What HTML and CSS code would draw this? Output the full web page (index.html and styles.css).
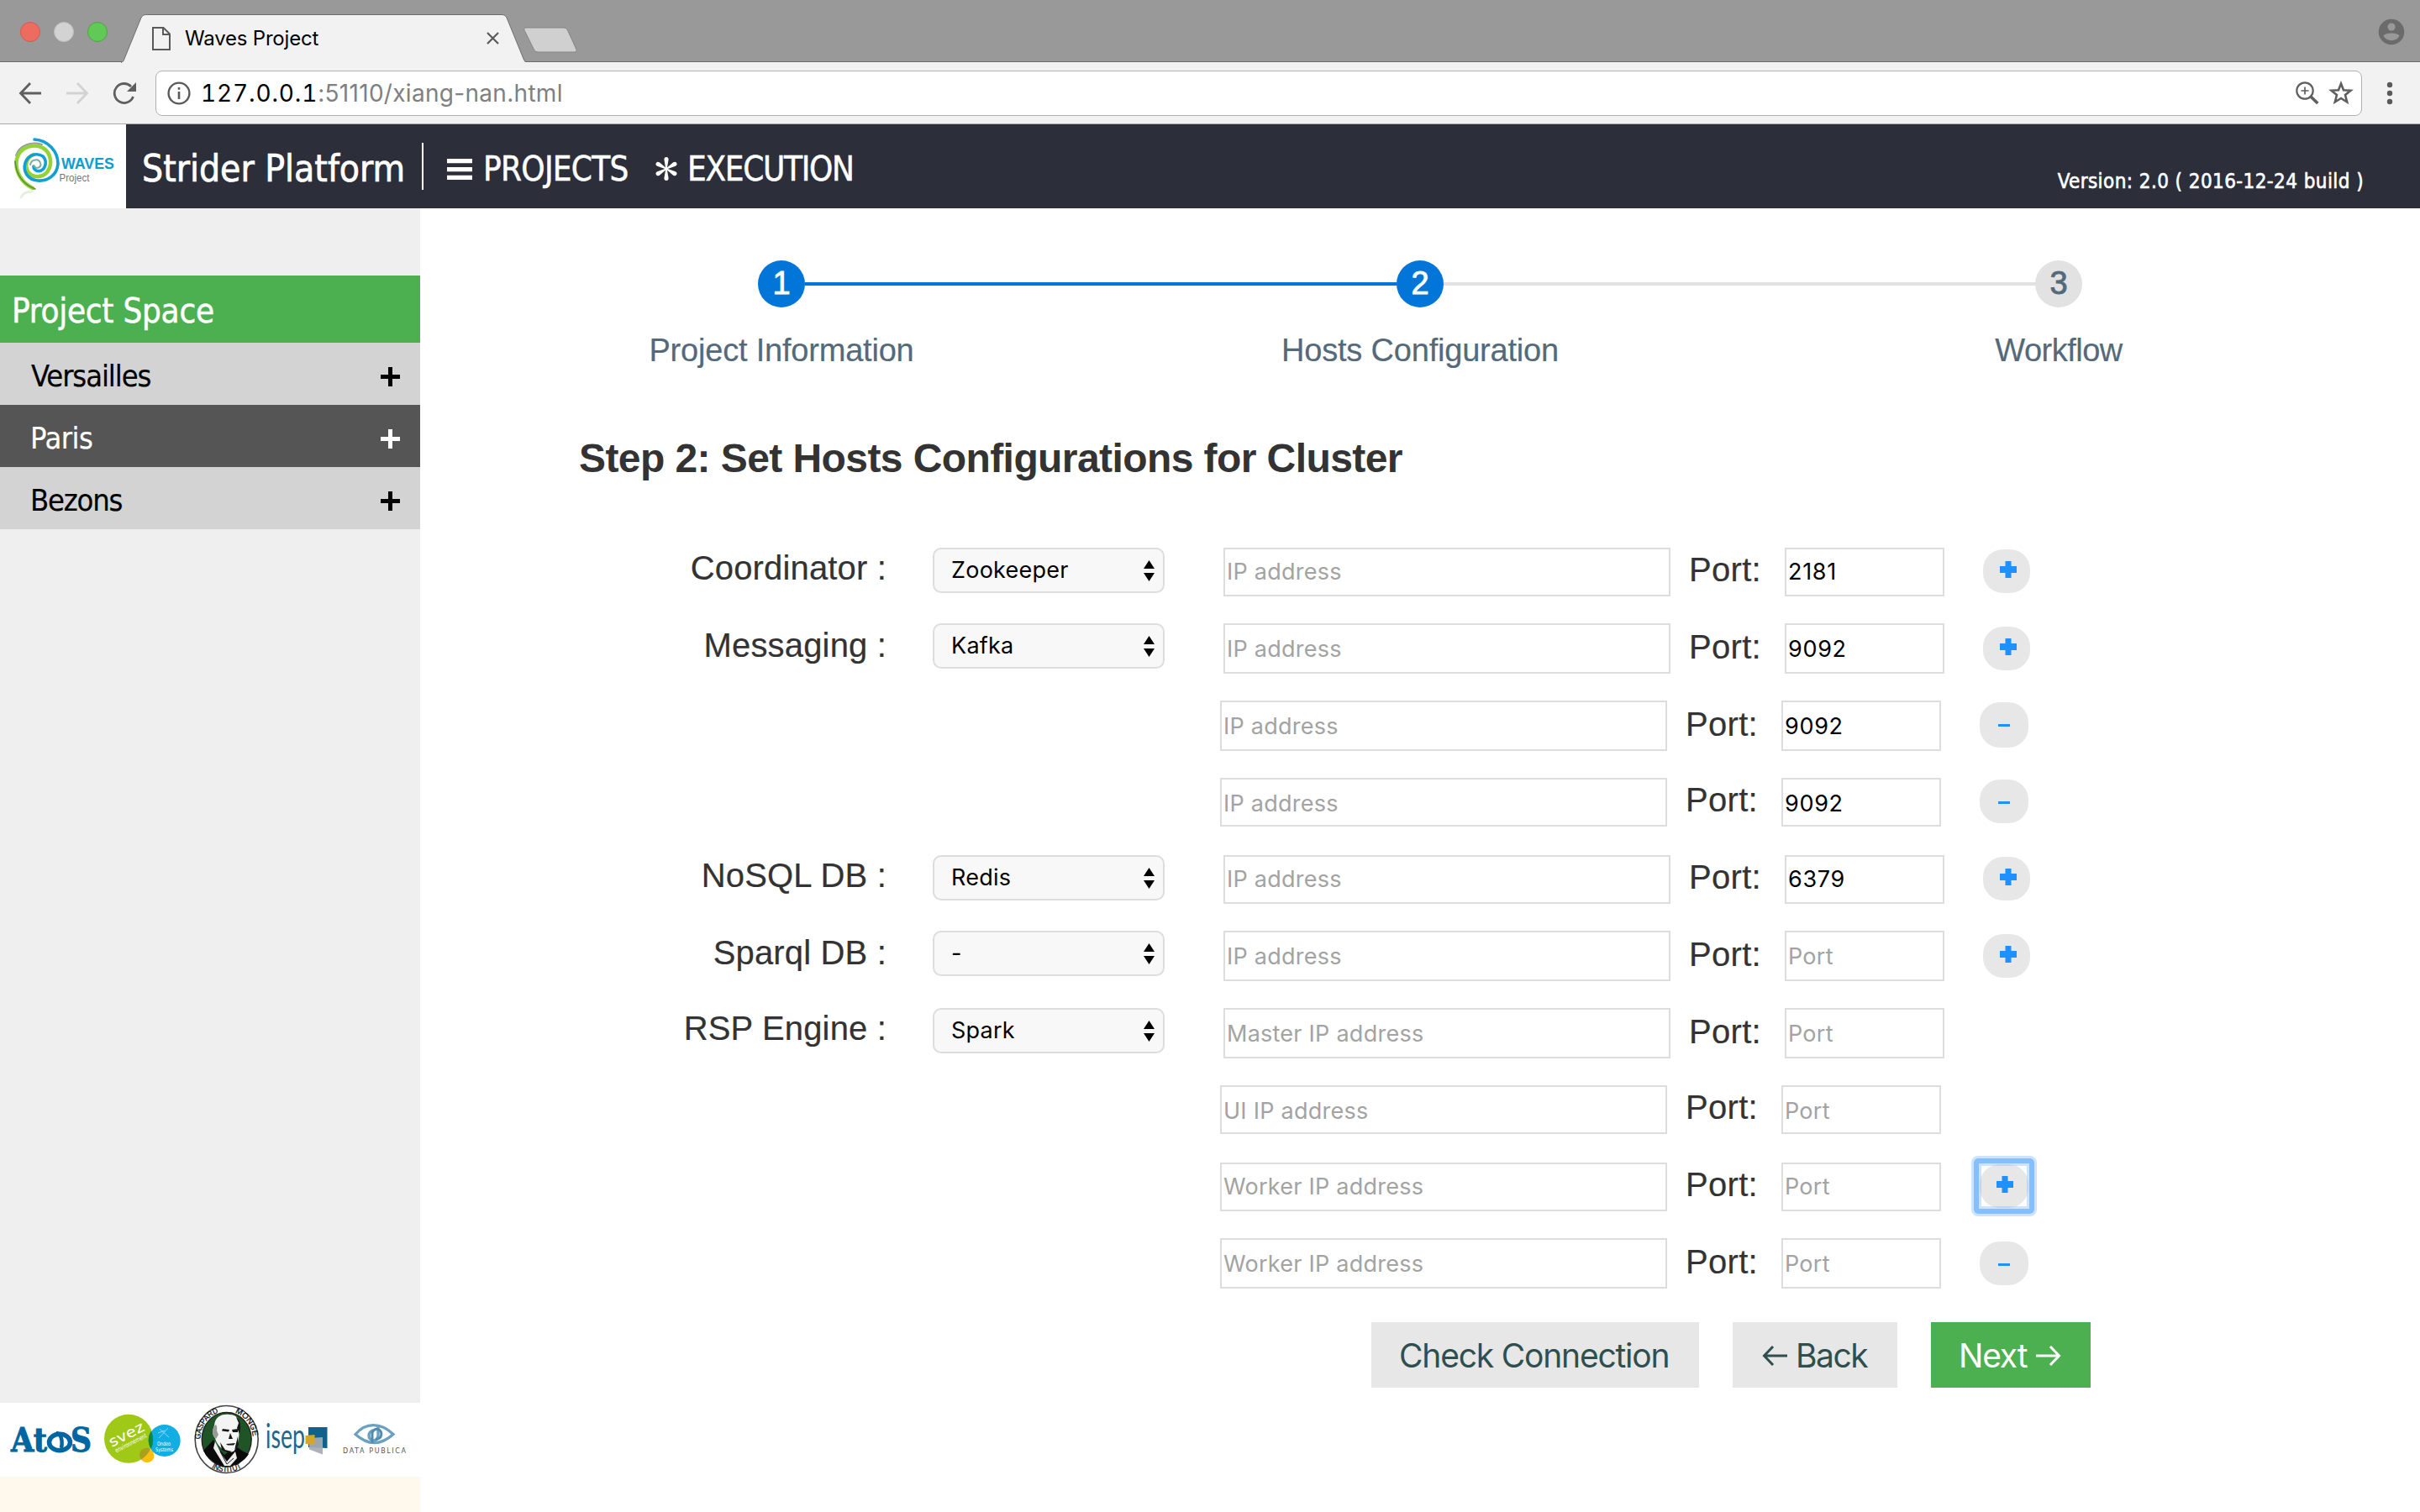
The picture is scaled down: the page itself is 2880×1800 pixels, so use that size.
FILE: index.html
```html
<!DOCTYPE html>
<html lang="en">
<head>
<meta charset="utf-8">
<title>Waves Project</title>
<link rel="stylesheet" href="styles.css">
</head>
<body>
<svg class="defs" width="0" height="0" aria-hidden="true">
  <symbol id="plus" viewBox="0 0 20 20"><path d="M6.500 0h7v6H20v8h-6.500v6h-7v-6H0V6h6.500z"/></symbol>
  <symbol id="minus" viewBox="0 0 14 3"><path d="M0 0h14v3H0z"/></symbol>
</svg>

<div class="tabstrip">
  <div class="lights"><span class="light red"></span><span class="light grey"></span><span class="light green"></span></div>
  <div class="tab">
    <svg class="tab-shape" width="486" height="58" viewBox="0 0 486 58"><path d="M0 57.500C2 57 3 56 4 53L24 4Q25.500 .5 29 .5H454Q457.500 .5 459 4L479 53Q480 57 484 57.500" fill="#f2f2f2" stroke="#6e6e6e"/><path d="M1 57h483v2H1z" fill="#f2f2f2"/></svg>
    <svg class="doc" width="22" height="28" viewBox="0 0 22 28" fill="none" stroke="#5a5a5a" stroke-width="2"><path d="M1 1h12.500L21 8.500V27H1zM13 1v8h8"/></svg>
    <span class="tab-title">Waves Project</span>
    <svg class="tab-close" width="15" height="15" viewBox="0 0 15 15" stroke="#5a5a5a" stroke-width="2.200"><path d="M1 1l13 13M14 1L1 14"/></svg>
  </div>
  <svg class="newtab" width="66" height="32" viewBox="0 0 66 32"><path d="M3 1H49Q52 1 53.500 4L64 27Q65 30 62 30H18Q15 30 13.500 27L2 4Q1 1 3 1z" fill="#d0d0d0" stroke="#858585"/></svg>
  <svg class="avatar" width="32" height="32" viewBox="0 0 32 32"><circle cx="16" cy="16" r="15.300" fill="#6b6b6b"/><circle cx="16" cy="10" r="4.600" fill="#999"/><path d="M6.500 20.500C9 16.500 23 16.500 25.500 20.500C22 28 10 28 6.500 20.500z" fill="#999"/></svg>
</div>

<div class="toolbar">
  <svg class="nav" width="28" height="28" viewBox="0 0 28 28" fill="none" stroke="#5f5f5f" stroke-width="2.800"><path d="M27 14H3M14 2L2.500 14L14 26"/></svg>
  <svg class="nav" width="28" height="28" viewBox="0 0 28 28" fill="none" stroke="#d2d2d2" stroke-width="2.800"><path d="M1 14H25M14 2L25.500 14L14 26"/></svg>
  <svg class="nav" width="28" height="28" viewBox="0 0 28 28"><path d="M24.500 18A11.500 11.500 0 1 1 22 6" fill="none" stroke="#5f5f5f" stroke-width="2.800"/><path d="M28 1V12H17z" fill="#5f5f5f"/></svg>
  <div class="omnibox">
    <svg width="28" height="28" viewBox="0 0 28 28"><circle cx="14" cy="14" r="12.400" fill="none" stroke="#5a5a5a" stroke-width="2.400"/><path d="M12.700 7h2.600v2.800h-2.600zM12.700 12h2.600v9h-2.600z" fill="#5a5a5a"/></svg>
    <span class="url"><span class="host">127.0.0.1</span><span class="path">:51110/xiang-nan.html</span></span>
    <svg class="lens" width="28" height="28" viewBox="0 0 28 28" fill="none" stroke="#5f5f5f"><circle cx="11" cy="11" r="9.700" stroke-width="2.200"/><path d="M6.500 11h9M11 6.500v9" stroke-width="1.700"/><path d="M18 18L26.300 26" stroke-width="3.600"/></svg>
    <svg width="30" height="29" viewBox="0 0 30 29"><path d="M15 3.500L18 11.200L26.500 11.800L20 17L22.200 25.500L15 21L7.800 25.500L10 17L3.500 11.800L12 11.200z" fill="none" stroke="#5f5f5f" stroke-width="2.600"/></svg>
  </div>
  <svg class="menu" width="8" height="28" viewBox="0 0 8 28" fill="#5a5a5a"><circle cx="4" cy="4" r="3.200"/><circle cx="4" cy="14" r="3.200"/><circle cx="4" cy="24" r="3.200"/></svg>
</div>

<header class="header">
  <div class="logo">
    <svg width="150" height="100" viewBox="0 0 150 100" fill="none" stroke-linecap="round">
      <path d="M19 37C23 25 37 20 50 24" stroke="#9a9a9a" stroke-width="2"/>
      <path d="M39 76C26 70 17 56 20 41C24 27 40 22 51 28C61 34 63 48 56 57C50 64 38 64 33 56C29 48 32 39 40 36" stroke="#94d335" stroke-width="4.500"/>
      <path d="M41 18C57 19 69 32 69 47C68 61 56 68 45 67C33 66 27 56 30 46C33 37 43 33 51 38C56 43 55 52 49 55C44 57 40 54 40 50" stroke="#149fd2" stroke-width="3.600"/>
      <path d="M36 48C37 42 46 40 48 46C50 51 43 54 41 50" stroke="#7fae9a" stroke-width="2"/>
      <path d="M18 44C19 60 28 72 42 77" stroke="#5d8d35" stroke-width="1.600"/>
      <path d="M25 87C27 82 32 80 38 80" stroke="#e6efe0" stroke-width="3"/>
      <text x="73" y="52.500" class="logo-waves" textLength="63" lengthAdjust="spacingAndGlyphs">WAVES</text>
      <text x="70.500" y="67.500" class="logo-project" textLength="36" lengthAdjust="spacingAndGlyphs">Project</text>
    </svg>
  </div>
  <div class="brand">Strider Platform</div>
  <nav class="topnav">
    <a class="nav-projects"><svg width="30" height="25" viewBox="0 0 30 25" fill="#fff"><path d="M0 0h30v5.200H0zM0 10h30v5.200H0zM0 19.800h30v5.200H0z"/></svg><span>PROJECTS</span></a>
    <a class="nav-execution"><svg width="26" height="28" viewBox="0 0 26 28" fill="#fff"><g id="petal"><path d="M12.300 14L10.400 3Q10.400 0 13 0Q15.600 0 15.600 3L13.700 14z"/></g><use href="#petal" transform="rotate(60 13 14)"/><use href="#petal" transform="rotate(120 13 14)"/><use href="#petal" transform="rotate(180 13 14)"/><use href="#petal" transform="rotate(240 13 14)"/><use href="#petal" transform="rotate(300 13 14)"/></svg><span>EXECUTION</span></a>
  </nav>
  <div class="version">Version: 2.0 ( 2016-12-24 build )</div>
</header>

<div class="body">
  <aside class="sidebar">
    <div class="side-title">Project Space</div>
    <div class="side-item"><span class="n1">Versailles</span><svg width="23" height="23" viewBox="0 0 23 23"><path d="M9 0h5v9h9v5h-9v9H9v-9H0V9h9z"/></svg></div>
    <div class="side-item active"><span class="n2">Paris</span><svg width="23" height="23" viewBox="0 0 23 23"><path d="M9 0h5v9h9v5h-9v9H9v-9H0V9h9z"/></svg></div>
    <div class="side-item"><span class="n3">Bezons</span><svg width="23" height="23" viewBox="0 0 23 23"><path d="M9 0h5v9h9v5h-9v9H9v-9H0V9h9z"/></svg></div>
    <div class="partners">
      <svg width="500" height="88" viewBox="0 0 500 88">
        <text x="13" y="58" class="p-atos" textLength="43" lengthAdjust="spacingAndGlyphs">At</text>
        <ellipse cx="71" cy="47" rx="12.500" ry="9.800" fill="none" stroke="#0066a1" stroke-width="5.500"/>
        <path d="M67 36C72 36 75 44 73 54" fill="none" stroke="#0066a1" stroke-width="4.500"/>
        <text x="84" y="58" class="p-atos" textLength="25" lengthAdjust="spacingAndGlyphs">S</text>
        <circle cx="153" cy="42.700" r="29" fill="#9fc916"/>
        <circle cx="175" cy="62.700" r="8.500" fill="#fdbf0f"/>
        <path d="M167 58A8.500 8.500 0 0 1 179 55A29 29 0 0 1 168 67.500A8.500 8.500 0 0 1 167 58z" fill="#a7a11d"/>
        <circle cx="195.700" cy="45" r="19" fill="#12ade2"/>
        <path d="M180 33.500A29 29 0 0 1 180 55A19 19 0 0 1 180 33.500z" fill="#0f8741"/>
        <text transform="translate(133 53) rotate(-27)" class="p-suez" textLength="45" lengthAdjust="spacingAndGlyphs">svez</text>
        <text transform="translate(138.500 59.500) rotate(-27)" class="p-env" textLength="41" lengthAdjust="spacingAndGlyphs">environnement</text>
        <path d="M190 31L201 41M200 30L189 42M188 36L196 33" stroke="#8fd6f0" fill="none"/>
        <text x="187" y="51" class="p-ondeo" textLength="16" lengthAdjust="spacingAndGlyphs">Ondeo</text>
        <text x="185" y="57.500" class="p-ondeo" textLength="21" lengthAdjust="spacingAndGlyphs">Systems</text>
        <ellipse cx="269.700" cy="43.500" rx="37.500" ry="40" fill="#fff" stroke="#444" stroke-width="1.600"/>
        <ellipse cx="269.700" cy="43.500" rx="29.500" ry="32" fill="#1f5427" stroke="#222" stroke-width="1.400"/>
        <path d="M242 57L254 44L258 52L267 62L281 52L288 57L296 61Q288 74 270 75.500Q252 74 242 57z" fill="#0b0b0b"/>
        <path d="M256 46L263 60L270 70L280 58L282 66L274 75H267L254 54z" fill="#eee"/>
        <path d="M262 58L270 73L278 66" fill="none" stroke="#222"/>
        <path d="M255 27C256 15 266 13 273 14C283 14 286 22 285 30L284 44C283 54 279 60 272 59C264 57 257 48 256 42C252 38 253 32 255 27z" fill="#f4f4f4"/>
        <path d="M255 28C257 24 259 28 258 33L260 38L257 43L254 39C252 34 253 31 255 28z" fill="#999"/>
        <path d="M281 17C287 20 287 30 285 37L282 30L284 24zM265 31L273 32L272 34.500L264 33.500zM276 32L283 31L283 35L277 35zM274 36L277 43L272 43zM269 49L280 48L278 50.500L271 50.500zM262 47L268 56L276 58L272 60L264 56zM283 40L284 50L279 58L280 52z" fill="#161616"/>
        <path id="arcTop" d="M238.500 43.500A31.200 33.500 0 0 1 301 43.500" fill="none"/>
        <path id="arcBottom" d="M233.500 43.500A36.200 38.800 0 0 0 306 43.500" fill="none"/>
        <text class="p-ring"><textPath href="#arcTop" startOffset="0" textLength="41" lengthAdjust="spacingAndGlyphs">GASPARD</textPath></text>
        <text class="p-ring"><textPath href="#arcTop" startOffset="61" textLength="37" lengthAdjust="spacingAndGlyphs">MONGE</textPath></text>
        <text class="p-ring"><textPath href="#arcBottom" startOffset="40" textLength="38" lengthAdjust="spacingAndGlyphs">INSTITUT</textPath></text>
        <text x="316" y="53.500" class="p-isep" textLength="47" lengthAdjust="spacingAndGlyphs">isep</text>
        <path d="M367 29h22.500v25l-22.500-1z" fill="#10618b"/><path d="M368 42l16-1v20.500l-16-6z" fill="#a5abb3" opacity=".92"/><path d="M363.500 39l11-1v12l-11-1z" fill="#d5a52c"/>
        <path d="M423 37.500C435 23 453 23 468 37.500C453 51 438 51 423 37.500z" fill="none" stroke="#6ba0bf" stroke-width="3.200"/><path d="M450 28V39A5.500 6 0 1 1 445 33" fill="none" stroke="#6ba0bf" stroke-width="3.400"/><path d="M443 48V36A5.500 6 0 1 1 447 43" fill="none" stroke="#4f8cb0" stroke-width="3"/>
        <text x="408" y="60" class="p-data" textLength="75">DATA PUBLICA</text>
      </svg>
    </div>
  </aside>

  <main class="main">
    <ol class="steps">
      <li class="step done"><span class="num">1</span><span class="step-label">Project Information</span></li>
      <li class="step current"><span class="num">2</span><span class="step-label">Hosts Configuration</span></li>
      <li class="step"><span class="num">3</span><span class="step-label workflow">Workflow</span></li>
    </ol>
    <h1 class="title">Step 2: Set Hosts Configurations for Cluster</h1>

    <form class="hosts">
      <div class="row">
        <label class="name">Coordinator :</label>
        <div class="select"><select><option>Zookeeper</option></select><svg width="13" height="25" viewBox="0 0 13 25"><path d="M0 10L6.500 0L13 10zM0 15h13L6.500 25z"/></svg></div>
        <input class="ip" placeholder="IP address"><label class="port-label">Port:</label><input class="port" value="2181">
        <button type="button" class="round"><svg width="20" height="20"><use href="#plus"/></svg></button>
      </div>
      <div class="row tall">
        <label class="name">Messaging :</label>
        <div class="select"><select><option>Kafka</option></select><svg width="13" height="25" viewBox="0 0 13 25"><path d="M0 10L6.500 0L13 10zM0 15h13L6.500 25z"/></svg></div>
        <input class="ip" placeholder="IP address"><label class="port-label">Port:</label><input class="port" value="9092">
        <button type="button" class="round low"><svg width="20" height="20"><use href="#plus"/></svg></button>
      </div>
      <div class="row tall sub">
        <input class="ip" placeholder="IP address"><label class="port-label">Port:</label><input class="port" value="9092">
        <button type="button" class="round remove big"><svg width="14" height="3"><use href="#minus"/></svg></button>
      </div>
      <div class="row sub drop">
        <input class="ip" placeholder="IP address"><label class="port-label">Port:</label><input class="port" value="9092">
        <button type="button" class="round remove"><svg width="14" height="3"><use href="#minus"/></svg></button>
      </div>
      <div class="row">
        <label class="name">NoSQL DB :</label>
        <div class="select"><select><option>Redis</option></select><svg width="13" height="25" viewBox="0 0 13 25"><path d="M0 10L6.500 0L13 10zM0 15h13L6.500 25z"/></svg></div>
        <input class="ip" placeholder="IP address"><label class="port-label">Port:</label><input class="port" value="6379">
        <button type="button" class="round"><svg width="20" height="20"><use href="#plus"/></svg></button>
      </div>
      <div class="row tall">
        <label class="name">Sparql DB :</label>
        <div class="select"><select><option>-</option></select><svg width="13" height="25" viewBox="0 0 13 25"><path d="M0 10L6.500 0L13 10zM0 15h13L6.500 25z"/></svg></div>
        <input class="ip" placeholder="IP address"><label class="port-label">Port:</label><input class="port" placeholder="Port">
        <button type="button" class="round low"><svg width="20" height="20"><use href="#plus"/></svg></button>
      </div>
      <div class="row tall">
        <label class="name high">RSP Engine :</label>
        <div class="select"><select><option>Spark</option></select><svg width="13" height="25" viewBox="0 0 13 25"><path d="M0 10L6.500 0L13 10zM0 15h13L6.500 25z"/></svg></div>
        <input class="ip" placeholder="Master IP address"><label class="port-label">Port:</label><input class="port" placeholder="Port">
      </div>
      <div class="row sub drop">
        <input class="ip" placeholder="UI IP address"><label class="port-label">Port:</label><input class="port" placeholder="Port">
      </div>
      <div class="row sub">
        <input class="ip" placeholder="Worker IP address"><label class="port-label">Port:</label><input class="port" placeholder="Port">
        <button type="button" class="round focused"><svg width="20" height="20"><use href="#plus"/></svg></button>
      </div>
      <div class="row tall sub">
        <input class="ip" placeholder="Worker IP address"><label class="port-label">Port:</label><input class="port" placeholder="Port">
        <button type="button" class="round remove low"><svg width="14" height="3"><use href="#minus"/></svg></button>
      </div>
    </form>

    <div class="actions">
      <button type="button" class="btn check">Check Connection</button>
      <button type="button" class="btn back"><svg width="30" height="24" viewBox="0 0 30 24"><path d="M30 12H3M13 1L2.500 12L13 23"/></svg><span>Back</span></button>
      <button type="button" class="btn next"><span>Next</span><svg width="30" height="24" viewBox="0 0 30 24"><path d="M0 12H27M17 1L27.500 12L17 23"/></svg></button>
    </div>
  </main>
</div>
</body>
</html>
```
FILE: styles.css
```css
* { box-sizing: border-box; }
body {
  margin: 0;
  width: 2880px;
  height: 1800px;
  overflow: hidden;
  display: flex;
  flex-direction: column;
  background: #fff;
  font-family: "Liberation Sans", Helvetica, Arial, sans-serif;
  color: #333;
}
svg { display: block; flex: none; }
.defs { position: absolute; }

/* Browser window */
.tabstrip {
  height: 74px;
  flex: none;
  display: flex;
  background: #999;
  border-bottom: 1px solid #6e6e6e;
}
.lights { display: flex; gap: 16px; padding: 26px 0 0 24px; width: 143px; flex: none; }
.light { width: 24px; height: 24px; border-radius: 50%; border: 1px solid; }
.red { background: #ee6b60; border-color: #d9574c; }
.grey { background: #d3d3d3; border-color: #bdbdbd; }
.green { background: #61c955; border-color: #4aa83f; }
.tab {
  position: relative;
  width: 479px;
  height: 57px;
  margin-top: 17px;
  padding-left: 38px;
  display: flex;
  align-items: center;
}
.tab-shape { position: absolute; left: 1px; top: 0; }
.doc, .tab-title, .tab-close { position: relative; }
.tab-title {
  margin-left: 17px;
  width: 359px;
  font: 24px/30px Inter, sans-serif;
  letter-spacing: -0.2px;
  color: #000;
}
.newtab { margin-top: 32px; }
.avatar { margin: 22px 18px 0 auto; }
.toolbar {
  height: 74px;
  flex: none;
  display: flex;
  align-items: center;
  padding: 0 32px 0 22px;
  background: #f2f2f2;
  border-bottom: 1px solid #a9a9ab;
}
.nav { margin-right: 28px; }
.nav:nth-child(3) { margin-right: 23px; }
.omnibox {
  flex: 1;
  height: 54px;
  display: flex;
  align-items: center;
  padding: 0 9px 0 13px;
  background: #fff;
  border: 1px solid #b1b1b1;
  border-radius: 8px;
}
.url {
  flex: 1;
  padding-left: 12px;
  font: 28px/36px Inter, sans-serif;
  color: #808080;
}
.host { color: #000; font-feature-settings: "tnum"; letter-spacing: 0.85px; }
.path { letter-spacing: 0.3px; }
.lens { margin-right: 11px; }
.menu { margin-left: 29px; }

/* Header */
.header {
  height: 100px;
  flex: none;
  display: flex;
  background: #2c2f3a;
  color: #fff;
  font-family: "DejaVu Sans Condensed", "DejaVu Sans", sans-serif;
  font-stretch: condensed;
}
.logo { width: 150px; background: #fff; }
.logo-waves { font: bold 18px "Liberation Sans", sans-serif; fill: #129bcf; stroke: none; }
.logo-project { font: 12px "Liberation Sans", sans-serif; fill: #777; stroke: none; }
.brand {
  width: 354px;
  height: 56px;
  margin-top: 22px;
  padding-left: 19px;
  border-right: 2px solid #fff;
  font-size: 44px;
  line-height: 61px;
  letter-spacing: 0;
  white-space: nowrap;
  -webkit-text-stroke: 0.7px currentColor;
}
.topnav { display: flex; padding-left: 27px; font-size: 40px; line-height: 106px; -webkit-text-stroke: 0.5px currentColor; }
.topnav a { display: flex; }
.nav-projects svg { margin: 41px 13px 0 1px; }
.nav-projects { width: 249px; letter-spacing: -0.7px; }
.nav-execution svg { margin: 39px 12px 0 0; }
.nav-execution { letter-spacing: -1.3px; }
.version {
  margin-left: auto;
  padding-right: 67px;
  font-size: 24px;
  line-height: 136px;
  letter-spacing: 0.42px;
  -webkit-text-stroke: 0.6px currentColor;
}

/* Sidebar */
.body { flex: 1; display: flex; min-height: 0; }
.sidebar {
  width: 500px;
  flex: none;
  display: flex;
  flex-direction: column;
  padding-top: 80px;
  background: linear-gradient(#efefef 1510px, #fff9ed 1510px);
  font-family: "DejaVu Sans Condensed", "DejaVu Sans", sans-serif;
  font-stretch: condensed;
}
.side-title {
  height: 80px;
  padding-left: 14px;
  background: #4caf50;
  color: #fff;
  font-size: 40px;
  line-height: 84px;
  letter-spacing: -0.25px;
  -webkit-text-stroke: 0.5px currentColor;
}
.side-item {
  height: 74px;
  display: flex;
  justify-content: space-between;
  padding: 0 24px 0 35px;
  background: #d3d3d3;
  color: #000;
  font-size: 36px;
  line-height: 79px;
  -webkit-text-stroke: 0.2px currentColor;
}
.side-item svg { margin-top: 29px; fill: currentColor; }
.side-item.active { background: #555; color: #fff; }
.n1 { padding-left: 2px; letter-spacing: -1.08px; }
.n2 { padding-left: 1px; letter-spacing: -0.5px; }
.n3 { padding-left: 1px; letter-spacing: -1.2px; }
.partners { margin-top: auto; margin-bottom: 42px; background: #fff; }
.p-atos { font: bold 40px "DejaVu Serif", serif; fill: #0066a1; stroke: #0066a1; stroke-width: 1px; }
.p-suez { font: 17px "DejaVu Sans", sans-serif; fill: #fff; }
.p-env { font: 7.5px "DejaVu Sans", sans-serif; fill: #fff; }
.p-ondeo { font: 6.5px "DejaVu Sans", sans-serif; fill: #fff; }
.p-ring { font: 9.5px "Liberation Sans", sans-serif; fill: #111; stroke: #111; stroke-width: 0.3px; }
.p-isep { font: 40px Lato, sans-serif; fill: #24658b; }
.p-data { font: 8px "DejaVu Sans", sans-serif; fill: #555; }

/* Wizard */
.main { flex: 1; padding: 62px 0 0 190px; }
.steps {
  list-style: none;
  display: flex;
  margin: 0 0 0 -140px;
  padding: 0;
}
.step {
  position: relative;
  width: 760px;
  display: flex;
  flex-direction: column;
  align-items: center;
  color: #546a7b;
  font-size: 38px;
  line-height: 48px;
}
.step:not(:last-child)::after {
  content: "";
  position: absolute;
  left: 408px;
  top: 26px;
  width: 704px;
  height: 4px;
  background: #e2e2e2;
}
.step.done:not(:last-child)::after { background: #0275d8; }
.num {
  width: 56px;
  height: 56px;
  margin-bottom: 27px;
  border-radius: 50%;
  background: #e2e2e2;
  text-align: center;
  line-height: 54px;
  -webkit-text-stroke: 0.9px currentColor;
}
.done .num, .current .num { background: #0275d8; color: #fff; }
.step-label { letter-spacing: -0.2px; -webkit-text-stroke: 0.2px currentColor; }
.workflow { letter-spacing: -0.5px; }
.title {
  margin: 75px 0 76px -1px;
  font-size: 48px;
  line-height: 60px;
  letter-spacing: -0.58px;
}

/* Hosts form */
.row {
  display: grid;
  grid-template-columns: 420px 346px 532px 136px 190px 46px 60px;
  height: 92px;
  align-items: start;
}
.row:nth-child(4n + 1) { height: 90px; }
.row:last-child { height: 60px; }
.sub { margin-left: -4px; }
.name {
  grid-column: 1;
  width: 365px;
  text-align: right;
  font-size: 40px;
  line-height: 48px;
  letter-spacing: 0.16px;
  -webkit-text-stroke: 0.2px currentColor;
}
.tall .name { padding-top: 2px; }
.tall .name.high { padding-top: 0; }
.select { position: relative; width: 276px; height: 54px; }
.select select {
  appearance: none;
  width: 100%;
  height: 100%;
  margin: 0;
  padding: 0 0 2px 20px;
  border: 2px solid #ddd;
  border-radius: 10px;
  background: #f8f8f8;
  color: #000;
  font: 27px Inter, sans-serif;
  letter-spacing: 0.25px;
}
.select svg { position: absolute; right: 12px; top: 15px; }
.ip, .port {
  height: 58px;
  margin: 0;
  padding: 0 2px 2px;
  border: 2px solid #ddd;
  border-radius: 0;
  background: #fff;
  color: #000;
  font: 27px Inter, sans-serif;
  letter-spacing: 0.25px;
}
.ip { grid-column: 3; width: 532px; }
.port { grid-column: 5; width: 190px; }
.port:not(:placeholder-shown) { letter-spacing: 0.7px; }
.tall .ip, .tall .port { height: 60px; padding-bottom: 0; }
.drop .ip, .drop .port { padding: 2px 2px 0; }
.ip::placeholder, .port::placeholder { color: #a3a3a3; opacity: 1; }
.port-label {
  grid-column: 4;
  padding: 2px 0 0 22px;
  font-size: 40px;
  line-height: 48px;
  letter-spacing: 0.3px;
  -webkit-text-stroke: 0.2px currentColor;
}
.tall .port-label { padding-top: 4px; }
.round {
  grid-column: 7;
  position: relative;
  width: 56px;
  height: 52px;
  margin-top: 2px;
  padding: 0;
  display: flex;
  align-items: start;
  border: 0;
  border-radius: 24px;
  background: #e7e7e7;
}
.round svg { margin: 14px 0 0 19.5px; fill: #1e90ff; }
.round.low { margin-top: 4px; }
.round.remove { width: 58px; }
.round.big { height: 54px; }
.round.remove svg { margin: 26px 0 0 22px; }
.round.focused { width: 58px; }
.focused::after {
  content: "";
  position: absolute;
  inset: -7px;
  border: 6px solid #85bfff;
  border-radius: 5px;
  box-shadow: 0 0 0 3px rgba(133, 191, 255, 0.42), inset 0 0 0 3px rgba(133, 191, 255, 0.42);
}

.actions { display: flex; gap: 40px; margin: 40px 0 0 942px; }
.btn {
  height: 78px;
  padding: 1px 0 0;
  border: 0;
  display: flex;
  align-items: center;
  background: #e7e7e7;
  color: #2f4f4f;
  font: 39px/50px Inter, sans-serif;
  letter-spacing: -1.2px;
  white-space: nowrap;
}
.btn svg { fill: none; stroke: currentColor; stroke-width: 3; }
.check { width: 390px; padding-left: 33px; }
.back { width: 196px; padding-left: 35px; gap: 10px; letter-spacing: -1.5px; }
.next { width: 190px; padding-left: 33px; gap: 11px; background: #4caf50; color: #fff; }
```
